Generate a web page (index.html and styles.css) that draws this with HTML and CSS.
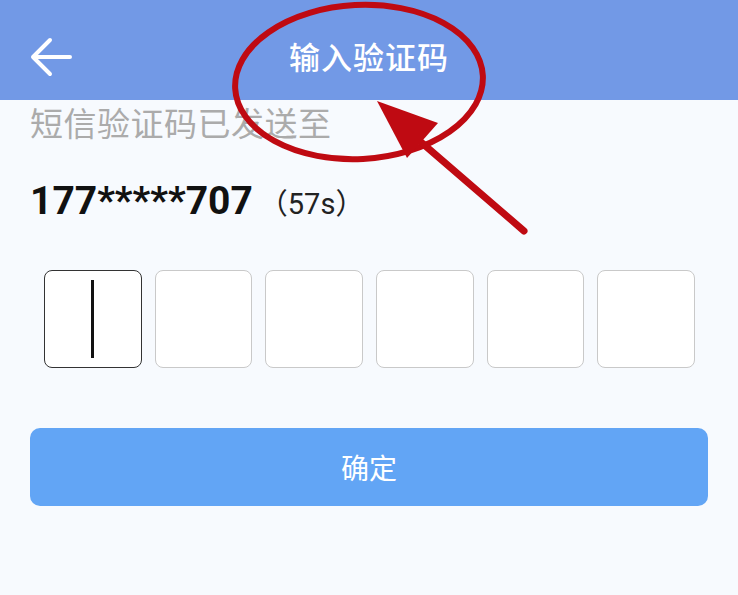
FILE: index.html
```html
<!DOCTYPE html>
<html lang="zh-CN">
<head>
    <meta charset="UTF-8">
    <meta name="viewport" content="width=device-width, initial-scale=1.0">
    <title>输入验证码</title>
    <link rel="stylesheet" href="styles.css">
</head>
<body>
    <div class="header">
        <div class="back-btn">
            <svg width="42" height="42" viewBox="0 0 42 42">
                <path d="M3 21 H40 M3 21 L20 4 M3 21 L20 38" fill="none" stroke="#fff" stroke-width="4" stroke-linecap="round" stroke-linejoin="round"/>
            </svg>
        </div>
        <h1 class="title">输入验证码</h1>
        <div></div>
    </div>

    <div class="content">
        <p class="hint">短信验证码已发送至</p>
        <div class="phone-line">
            <span class="phone">177*****707</span>
            <span class="timer">（57s）</span>
        </div>

        <div class="code-boxes">
            <div class="code-box active"><span class="cursor"></span></div>
            <div class="code-box"></div>
            <div class="code-box"></div>
            <div class="code-box"></div>
            <div class="code-box"></div>
            <div class="code-box"></div>
        </div>

        <button class="confirm-btn">确定</button>
    </div>

    <!-- red annotation drawn over the screenshot -->
    <svg class="annotation" width="738" height="595" viewBox="0 0 738 595">
        <ellipse cx="359" cy="82" rx="124" ry="77" transform="rotate(-3 359 82)" fill="none" stroke="#BF0A12" stroke-width="6"/>
        <line x1="524" y1="231" x2="400" y2="124" stroke="#BF0A12" stroke-width="7" stroke-linecap="round"/>
        <polygon points="377,101 438,123 407,158" fill="#BF0A12"/>
    </svg>
</body>
</html>
```

FILE: styles.css
```css
* {
    margin: 0;
    padding: 0;
    box-sizing: border-box;
    font-family: "Noto Sans CJK SC", "Noto Sans", sans-serif;
}

body {
    background: #F7FAFE;
    min-height: 100vh;
    overflow: hidden;
}

.header {
    height: 100px;
    background: #7299E6;
    display: grid;
    grid-template-columns: 1fr auto 1fr;
    align-items: center;
}

.back-btn {
    padding-left: 30px;
    padding-top: 14px;
    display: flex;
}

.title {
    padding-top: 10px;
    color: #fff;
    font-size: 31px;
    font-weight: 500;
    letter-spacing: 1px;
}

.content {
    padding: 0 30px;
}

.hint {
    font-size: 33px;
    line-height: 44px;
    color: #ABABAB;
    letter-spacing: 0.5px;
}

.phone-line {
    margin-top: 33px;
    line-height: 48px;
    display: flex;
    align-items: baseline;
}

.phone {
    font-family: Roboto, "Noto Sans", sans-serif;
    font-size: 39px;
    font-weight: 700;
    color: #111;
}

.timer {
    font-family: Roboto, "Noto Sans CJK SC", sans-serif;
    font-size: 29px;
    color: #222;
    margin-left: 6px;
}

.code-boxes {
    margin-top: 42px;
    padding: 0 13px 0 14px;
    display: grid;
    grid-template-columns: repeat(6, 1fr);
    gap: 13px;
}

.code-box {
    height: 98px;
    background: #fff;
    border: 1px solid #C9C9C9;
    border-radius: 8px;
    display: flex;
    justify-content: center;
    align-items: center;
}

.code-box.active {
    border-color: #333;
}

.cursor {
    width: 3px;
    height: 78px;
    background: #111;
}

.confirm-btn {
    margin-top: 60px;
    width: 100%;
    height: 78px;
    background: #62A5F5;
    border: none;
    border-radius: 10px;
    color: #fff;
    font-size: 28px;
}

.annotation {
    position: absolute;
    top: 0;
    left: 0;
    pointer-events: none;
}
```
